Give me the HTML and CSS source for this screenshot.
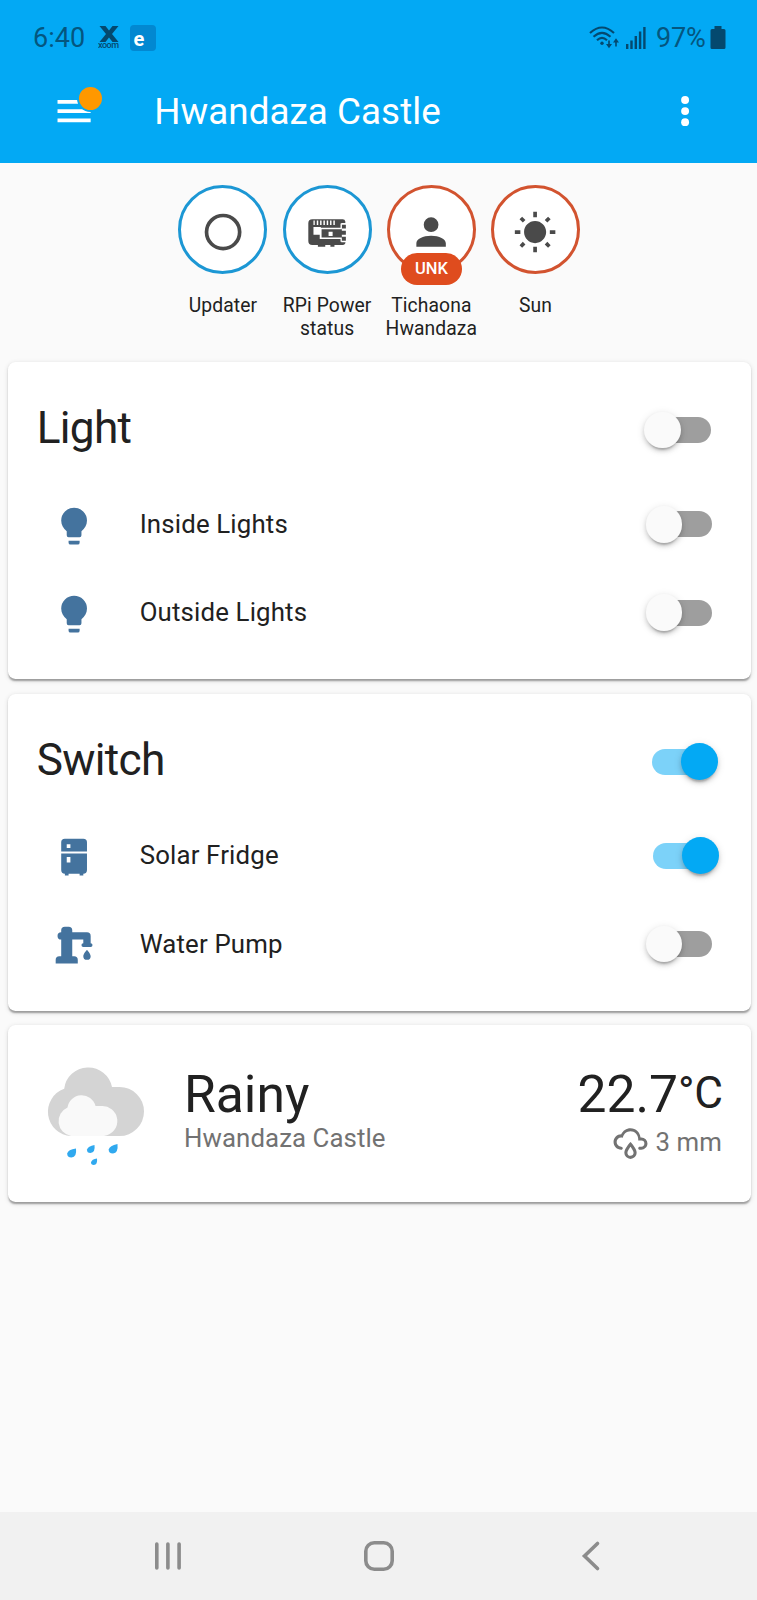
FILE: index.html
```html
<!DOCTYPE html>
<html lang="en">
<head>
<meta charset="utf-8">
<title>Hwandaza Castle</title>
<link rel="stylesheet" href="styles.css">
</head>
<body>
<div class="screen">
  <header class="top">
    <div class="status">
      <span class="clock">6:40</span>
      <svg class="xoom" width="22" height="24" viewBox="0 0 22 24"><path d="M1.500 0h6l3.500 4.500 3.500-4.500h6l-6.500 8 6.500 8h-6l-3.500-4.500-3.500 4.500h-6l6.500-8z"/><text x="0" y="22" textLength="21">xoom</text></svg>
      <span class="eapp">e</span>
      <span class="spring"></span>
      <svg class="wifi" width="30" height="23" viewBox="0 0 30 23"><g fill="none" stroke="#04496f" stroke-width="2.100"><path d="M1 7Q13-4 25 7"/><path d="M4.500 10.800Q13 3 21.500 10.800"/><path d="M8 14.300Q13 9.500 18 14.300"/><path d="M20 14.500v5M27 20.500v-6" stroke-width="1.600"/></g><circle cx="13" cy="17.300" r="1.700"/><path d="M17 18h6l-3 4.200zM24 16.500h6l-3-4.200z"/></svg>
      <svg class="signal" width="20" height="22" viewBox="0 0 20 22"><path d="M0 17h2.400v5H0zM4.300 13.500h2.400V22H4.300zM8.600 9h2.400v13H8.600zM12.900 4.500h2.400V22h-2.400zM17.200 0h2.400v22h-2.400z"/></svg>
      <span class="percent">97%</span>
      <svg class="battery" width="16" height="24" viewBox="0 0 16 24"><path d="M4.500 0h7v3H14a1.500 1.500 0 0 1 1.500 1.500v17A1.500 1.500 0 0 1 14 23H2A1.500 1.500 0 0 1 .5 21.500v-17A1.500 1.500 0 0 1 2 3h2.500z"/></svg>
    </div>
    <div class="toolbar">
      <span class="menu"><svg class="icon" viewBox="0 0 24 24"><path d="M3,6H21V8H3V6M3,11H21V13H3V11M3,16H21V18H3V16Z"/></svg><i class="dot"></i></span>
      <h1 class="title">Hwandaza Castle</h1>
      <svg class="icon more" viewBox="0 0 24 24"><circle cx="12" cy="6" r="2.150"/><circle cx="12" cy="12" r="2.150"/><circle cx="12" cy="18" r="2.150"/></svg>
    </div>
  </header>

  <section class="badges">
    <div class="badge"><div class="ring"><svg class="icon" viewBox="0 0 24 24"><path d="M12,20A8,8 0 0,1 4,12A8,8 0 0,1 12,4A8,8 0 0,1 20,12A8,8 0 0,1 12,20M12,2A10,10 0 0,0 2,12A10,10 0 0,0 12,22A10,10 0 0,0 22,12A10,10 0 0,0 12,2Z"/></svg></div><div class="name">Updater</div></div>
    <div class="badge"><div class="ring"><svg class="icon" viewBox="0 0 24 24"><path d="M4 5H20.500Q21.700 5 21.900 6.200V7H19.700V10H20V8H22.200V10H20V11.300H22.200V13.500H20V14.500H22.200V16.700H19.700V17.500H22Q21.800 19 20.500 19H16V20H13.800V19H11V20H7V19H4Q1.800 19 1.800 16.800V7.200Q1.800 5 4 5Z"/><path class="cut" d="M4.600 5.700H5.300V8.200H4.600zM6.400 5.700H7.200V8.200H6.400zM8.200 5.700H9V8.200H8.200zM10 5.700H10.800V8.200H10zM11.800 5.700H12.600V8.200H11.800zM13.600 5.700H14.400V8.200H13.600zM15.400 5.700H16.200V8.200H15.400zM4.600 9.200H8.600V9.700H19.300V10.500H9V15H19.300V15.800H8V13.500H4.600zM12.800 11.800H15V14.100H12.800zM19.300 7.300H20V10.500H19.300zM19.300 15H20V17.300H19.300z"/></svg></div><div class="name">RPi Power<br>status</div></div>
    <div class="badge red"><div class="ring"><svg class="icon" viewBox="0 0 24 24"><path d="M12,4A4,4 0 0,1 16,8A4,4 0 0,1 12,12A4,4 0 0,1 8,8A4,4 0 0,1 12,4M12,14C16.420,14 20,15.790 20,18V20H4V18C4,15.790 7.580,14 12,14Z"/></svg><span class="pill">UNK</span></div><div class="name">Tichaona<br>Hwandaza</div></div>
    <div class="badge red"><div class="ring"><svg class="icon" viewBox="0 0 24 24"><path d="M3.550 19.090L4.960 20.500L6.760 18.710L5.340 17.290M12 6C8.690 6 6 8.690 6 12S8.690 18 12 18 18 15.310 18 12C18 8.680 15.310 6 12 6M20 13H23V11H20M17.240 18.710L19.040 20.500L20.450 19.090L18.660 17.290M20.450 5L19.040 3.600L17.240 5.390L18.660 6.810M13 1H11V4H13M6.760 5.390L4.960 3.600L3.550 5L5.340 6.810L6.760 5.390M1 13H4V11H1M13 20H11V23H13"/></svg></div><div class="name">Sun</div></div>
  </section>

  <main class="cards">
    <section class="card">
      <div class="card-head"><h2>Light</h2><span class="switch"></span></div>
      <div class="row"><svg class="icon" viewBox="0 0 24 24"><path d="M12,2A7,7 0 0,0 5,9C5,11.380 6.190,13.470 8,14.740V17A1,1 0 0,0 9,18H15A1,1 0 0,0 16,17V14.740C17.810,13.470 19,11.380 19,9A7,7 0 0,0 12,2M9,21A1,1 0 0,0 10,22H14A1,1 0 0,0 15,21V20H9V21Z"/></svg><span class="label">Inside Lights</span><span class="switch"></span></div>
      <div class="row"><svg class="icon" viewBox="0 0 24 24"><path d="M12,2A7,7 0 0,0 5,9C5,11.380 6.190,13.470 8,14.740V17A1,1 0 0,0 9,18H15A1,1 0 0,0 16,17V14.740C17.810,13.470 19,11.380 19,9A7,7 0 0,0 12,2M9,21A1,1 0 0,0 10,22H14A1,1 0 0,0 15,21V20H9V21Z"/></svg><span class="label">Outside Lights</span><span class="switch"></span></div>
    </section>
    <section class="card">
      <div class="card-head"><h2>Switch</h2><span class="switch on"></span></div>
      <div class="row"><svg class="icon" viewBox="0 0 24 24"><path d="M7,2H17A2,2 0 0,1 19,4V9H5V4A2,2 0 0,1 7,2M19,19A2,2 0 0,1 17,21V22H15V21H9V22H7V21A2,2 0 0,1 5,19V10H19V19M8,5V7H10V5H8M8,12V15H10V12H8Z"/></svg><span class="label">Solar Fridge</span><span class="switch on"></span></div>
      <div class="row"><svg class="icon" viewBox="0 0 24 24"><path d="M19,14.500C19,14.500 21,16.670 21,18A2,2 0 0,1 19,20A2,2 0 0,1 17,18C17,16.670 19,14.500 19,14.500M5,18V9A2,2 0 0,1 3,7A2,2 0 0,1 5,5V4A2,2 0 0,1 7,2H9A2,2 0 0,1 11,4V5H19A2,2 0 0,1 21,7V9L21,11A1,1 0 0,1 22,12A1,1 0 0,1 21,13H17A1,1 0 0,1 16,12A1,1 0 0,1 17,11V9H11V18H12A2,2 0 0,1 14,20V22H2V20A2,2 0 0,1 4,18H5Z"/></svg><span class="label">Water Pump</span><span class="switch"></span></div>
    </section>
    <section class="card weather">
      <svg class="rain" width="118" height="118" viewBox="37 44 118 118">
        <path fill="#d4d4d4" d="M71 127A24.300 24.300 0 0 1 64.200 79.800A24.200 24.200 0 0 1 112 78H119.500A24.500 24.500 0 0 1 119.500 127Z"/>
        <path fill="#f9f9f9" d="M71 127A15 15 0 0 1 67.500 98.500A14.300 14.300 0 0 1 95.500 97H100.500A15 15 0 0 1 104 127Z"/>
        <g fill="#30a9ef"><path d="M76 139.500Q77 148 71.500 148.500Q67 148.500 67.200 144.500Q68 140.500 76 139.500Z"/><path d="M94.500 136Q95.500 143.500 90.500 144Q86.800 144 87 140.500Q88 137 94.500 136Z"/><path d="M117.500 135Q118.500 144 113 144.500Q108.500 144.500 108.700 140.500Q109.500 136.500 117.500 135Z"/><path d="M97 149.500Q97.800 155.500 93.800 156Q90.900 156 91 153.300Q91.800 150.300 97 149.500Z"/></g>
      </svg>
      <div class="cond"><div class="big">Rainy</div><div class="sub">Hwandaza Castle</div></div>
      <div class="temp"><div class="big">22.7<span class="unit">°C</span></div><div class="sub precip"><svg width="37" height="37" viewBox="0 0 24 24"><path d="M6,14.030A1,1 0 0,1 7,15.030C7,15.580 6.550,16.030 6,16.030C3.240,16.030 1,13.790 1,11.030C1,8.270 3.240,6.030 6,6.030C7,3.680 9.300,2.030 12,2.030C15.430,2.030 18.240,4.690 18.500,8.060L19,8.030A4,4 0 0,1 23,12.030C23,14.230 21.210,16.030 19,16.030H18C17.450,16.030 17,15.580 17,15.030C17,14.470 17.450,14.030 18,14.030H19A2,2 0 0,0 21,12.030A2,2 0 0,0 19,10.030H17V9.030C17,6.270 14.760,4.030 12,4.030C9.500,4.030 7.450,5.840 7.060,8.210C6.730,8.090 6.370,8.030 6,8.030A3,3 0 0,0 3,11.030A3,3 0 0,0 6,14.030M12,14.150C12.180,14.390 12.370,14.660 12.560,14.940C13,15.560 14,17.030 14,18C14,19.110 13.100,20 12,20A2,2 0 0,1 10,18C10,17.030 11,15.560 11.440,14.940C11.630,14.660 11.820,14.400 12,14.150M12,11.030L11.500,11.590C11.500,11.590 10.650,12.550 9.790,13.810C8.930,15.060 8,16.560 8,18A4,4 0 0,0 12,22A4,4 0 0,0 16,18C16,16.560 15.070,15.060 14.210,13.810C13.350,12.550 12.500,11.590 12.500,11.590"/></svg><span>3 mm</span></div></div>
    </section>
  </main>

  <nav class="navbar">
    <svg width="30" height="32" viewBox="0 0 30 32"><path d="M3.800 4v24M14.900 4v24M26.100 4v24"/></svg>
    <svg width="32" height="32" viewBox="0 0 32 32"><rect x="2.800" y="2.800" width="26.400" height="26.400" rx="8.500"/></svg>
    <svg width="20" height="32" viewBox="0 0 20 32"><path d="M16.500 3.500L3.500 16L16.500 28.500"/></svg>
  </nav>
</div>
</body>
</html>
```

FILE: styles.css
```css
* { box-sizing: border-box; }
body { margin: 0; font-family: Roboto, "Liberation Sans", sans-serif; background: #fafafa; color: #212121; }
h1, h2 { margin: 0; font-weight: 400; }
svg { display: block; flex: none; }
.screen { width: 757px; height: 1600px; display: flex; flex-direction: column; }
.icon { width: 44.200px; height: 44.200px; fill: currentColor; }

.top { background: #03a9f4; height: 163px; }
.status { height: 74px; padding: 1px 31px 0 33px; display: flex; align-items: center; color: #04567f; fill: #04496f; }
.clock { font-size: 27px; line-height: 32px; padding-top: 1px; }
.xoom { margin-left: 12.500px; }
.xoom text { font-size: 9px; font-weight: 500; }
.eapp { width: 26px; height: 26px; margin-left: 10px; padding-left: 4px; border-radius: 4px; background: #0288d1; color: #fff; font-size: 20px; line-height: 28px; font-weight: 700; }
.spring { flex: 1; }
.wifi { margin-right: 7px; }
.signal { margin-right: 9.500px; }
.percent { font-size: 27px; line-height: 32px; padding-top: 1px; margin-right: 4.500px; letter-spacing: -.2px; }
.toolbar { height: 75px; padding: 0 50px 0 52px; display: flex; align-items: center; color: #fff; }
.menu { position: relative; }
.dot { position: absolute; left: 25px; top: -4px; width: 27px; height: 27px; border: 2px solid #03a9f4; border-radius: 50%; background: #ff9800; }
.title { flex: 1; margin-left: 58px; padding-top: 1px; font-size: 36.800px; line-height: 44px; letter-spacing: .05px; }

.badges { height: 199px; padding: 22px 0 0 1.500px; display: flex; justify-content: center; gap: 2.200px; }
.badge { width: 102px; display: flex; flex-direction: column; align-items: center; }
.ring { position: relative; width: 89px; height: 89px; border: 3px solid #1c97d4; border-radius: 50%; background: #fff; color: #4a4a4a; display: flex; align-items: center; justify-content: center; padding-top: 5px; }
.cut { fill: #fff; }
.red .ring { border-color: #d2532f; }
.pill { position: absolute; left: 11px; top: 64.500px; width: 61px; height: 32px; border-radius: 16px; background: #df4c1e; color: #fff; font-size: 16.500px; font-weight: 500; line-height: 32px; text-align: center; }
.name { margin-top: 20px; font-size: 19.300px; line-height: 23px; letter-spacing: .1px; text-align: center; white-space: nowrap; }

.cards { flex: 1; padding: 0 6px 0 8px; display: flex; flex-direction: column; gap: 14.500px; }
.card { height: 317px; border-radius: 7.400px; background: #fff; box-shadow: 0 3.700px 1.800px -1.800px rgba(0,0,0,.2), 0 1.800px 1.800px rgba(0,0,0,.14), 0 1.800px 5.500px rgba(0,0,0,.12); }
.card-head { height: 118px; padding: 14px 40.500px 0 28.700px; display: flex; align-items: center; justify-content: space-between; }
.card-head h2 { font-size: 44.200px; line-height: 60px; letter-spacing: -.016em; }
.card-head .switch { margin-top: 4px; }
.row { height: 88.400px; padding: 0 39px 0 44px; display: flex; align-items: center; color: #44739e; }
.row .icon { margin-top: 3px; }
.label { flex: 1; margin-left: 43.500px; margin-top: -1px; font-size: 25.800px; line-height: 32px; letter-spacing: .16px; color: #212121; }
.switch { position: relative; width: 59px; height: 26px; border-radius: 13px; background: #9e9e9e; }
.switch::after { content: ""; position: absolute; left: -7.400px; top: -5.400px; width: 36.800px; height: 36.800px; border-radius: 50%; background: #fafafa; box-shadow: 0 5px 2px -3px rgba(0,0,0,.2), 0 3px 4px rgba(0,0,0,.14), 0 1.800px 8px rgba(0,0,0,.12); }
.switch.on { background: #7cd2f9; }
.switch.on::after { left: 29.400px; background: #03a9f4; }

.weather { height: 177px; padding: 0 28.500px 0 29px; display: flex; align-items: flex-start; }
.rain { margin-top: 28px; }
.cond { flex: 1; margin-left: 29px; padding-top: 40px; }
.temp { padding-top: 40px; text-align: right; }
.big { font-size: 51.600px; line-height: 60px; height: 57px; white-space: nowrap; }
.unit { font-size: 44.200px; line-height: 1; vertical-align: 4.500px; letter-spacing: -.4px; }
.sub { font-size: 25.800px; line-height: 32px; letter-spacing: .08px; color: #727272; }
.precip { display: flex; align-items: center; justify-content: flex-end; gap: 7px; fill: #727272; margin: -.500px .500px 0 0; }
.precip svg { margin-top: 3px; }

.navbar { height: 88px; background: #f1f1f1; display: flex; align-items: center; padding-left: 152.500px; }
.navbar svg { fill: none; stroke: #8c8c8c; stroke-width: 3.600px; stroke-linecap: round; }
.navbar svg + svg { margin-left: 180.500px; }
.navbar svg:last-child { margin-left: 186px; }
```
